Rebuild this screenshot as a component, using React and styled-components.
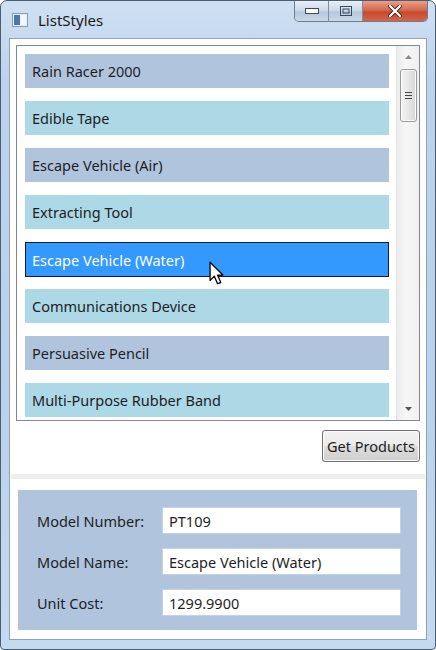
import React from "react";
import styled, { createGlobalStyle } from "styled-components";

const Global = createGlobalStyle`
  html, body { margin: 0; padding: 0; background: #ffffff; }
  body { font-family: "Noto Sans", "Open Sans", sans-serif; }
  * { box-sizing: border-box; }
`;

const Window = styled.div`
  position: relative;
  width: 436px;
  height: 650px;
  border: 1px solid #4b5d70;
  border-radius: 7px 7px 4px 4px;
  background: linear-gradient(180deg, #cfe0f2 0%, #bdd3ec 12%, #b9d1ea 60%, #c4daf0 100%);
  display: flex;
  flex-direction: column;
  overflow: hidden;
`;

const TitleBar = styled.div`
  height: 37px;
  display: flex;
  align-items: flex-start;
  padding-left: 11px;
`;

const TitleLeft = styled.div`
  display: flex;
  align-items: center;
  gap: 10px;
  height: 37px;
  flex: 1;
`;

const Title = styled.span`
  font-size: 15px;
  color: #1a1a1a;
`;

const Caption = styled.div`
  display: flex;
  margin-right: 7px;
  height: 21px;
  border: 1px solid #6a7c90;
  border-top: none;
  border-radius: 0 0 5px 5px;
  overflow: hidden;
`;

const CapButton = styled.div`
  width: ${(p) => p.$w}px;
  height: 20px;
  display: flex;
  align-items: center;
  justify-content: center;
  background: ${(p) =>
    p.$close
      ? "linear-gradient(180deg, #e8a08c 0%, #d66a4e 45%, #c74a2e 55%, #d4654a 100%)"
      : "linear-gradient(180deg, #e6eef8 0%, #cfdbea 45%, #b6c7dc 55%, #c9d8ea 100%)"};
  border-left: ${(p) => (p.$first ? "none" : "1px solid #7d8fa3")};
`;

const Client = styled.div`
  flex: 1;
  margin: 0 8px 9px 8px;
  border: 1px solid #8ea2b8;
  background: #ffffff;
  display: flex;
  flex-direction: column;
`;

const ListBox = styled.div`
  margin: 6px 6px 0 6px;
  height: 376px;
  border: 1px solid #828790;
  display: flex;
  overflow: hidden;
  background: #ffffff;
`;

const Items = styled.div`
  flex: 1;
  padding: 8px 7px 0 8px;
  display: flex;
  flex-direction: column;
  gap: 13px;
  overflow: hidden;
`;

const Item = styled.div`
  flex: none;
  height: ${(p) => (p.$selected ? "35px" : "34px")};
  margin-bottom: ${(p) => (p.$selected ? "-1px" : "0")};
  display: flex;
  align-items: center;
  padding-left: ${(p) => (p.$selected ? "6px" : "7px")};
  font-size: 14.5px;
  color: ${(p) => (p.$selected ? "#ffffff" : "#1e1e1e")};
  background: ${(p) => (p.$selected ? "#3399ff" : p.$alt ? "#add8e6" : "#b0c4de")};
  border: ${(p) => (p.$selected ? "1px solid #0e1a36" : "none")};
`;

const ScrollBar = styled.div`
  width: 23px;
  border-left: 1px solid #e4e4e4;
  background: linear-gradient(90deg, #ececec 0%, #f6f6f6 40%, #f0f0f0 100%);
  display: flex;
  flex-direction: column;
  align-items: center;
`;

const Arrow = styled.div`
  height: 22px;
  width: 100%;
  display: flex;
  align-items: center;
  justify-content: center;
`;

const Thumb = styled.div`
  width: 17px;
  height: 53px;
  margin-top: 1px;
  border: 1px solid #9a9a9a;
  border-radius: 3px;
  background: linear-gradient(90deg, #f4f4f4 0%, #e6e6e6 50%, #d6d6d6 100%);
  box-shadow: inset 0 0 0 1px #fbfbfb;
  display: flex;
  flex-direction: column;
  align-items: center;
  justify-content: center;
  gap: 2px;
`;

const Grip = styled.div`
  width: 7px;
  height: 1px;
  background: #444;
`;

const Track = styled.div`
  flex: 1;
`;

const ButtonRow = styled.div`
  display: flex;
  justify-content: flex-end;
  padding: 9px 6px 0 0;
`;

const PushButton = styled.button`
  height: 32px;
  width: 98px;
  padding: 0;
  font-family: "Noto Sans", "Open Sans", sans-serif;
  font-size: 14.5px;
  color: #1e1e1e;
  border: 1px solid #707070;
  border-radius: 3px;
  background: linear-gradient(180deg, #f2f2f2 0%, #ebebeb 50%, #dddddd 51%, #cfcfcf 100%);
  box-shadow: inset 0 0 0 1px #fafafa;
`;

const Separator = styled.div`
  height: 5px;
  margin: 12px 1px 0 1px;
  background: #eeeeee;
`;

const Details = styled.div`
  margin: 11px 9px 0 8px;
  height: 140px;
  background: #b0c4de;
  padding: 17px 16px 0 19px;
  display: grid;
  grid-template-columns: 125px 1fr;
  grid-auto-rows: 27px;
  row-gap: 14px;
  align-items: center;
`;

const Label = styled.span`
  font-size: 14.5px;
  color: #1e1e1e;
`;

const TextBox = styled.div`
  height: 27px;
  background: #ffffff;
  border: 1px solid #c4d2e4;
  display: flex;
  align-items: center;
  padding-left: 6px;
  font-size: 14.5px;
  color: #1e1e1e;
`;

const Cursor = styled.svg`
  position: absolute;
  left: 208px;
  top: 260px;
`;

const products = [
  "Rain Racer 2000",
  "Edible Tape",
  "Escape Vehicle (Air)",
  "Extracting Tool",
  "Escape Vehicle (Water)",
  "Communications Device",
  "Persuasive Pencil",
  "Multi-Purpose Rubber Band",
];

export default function App() {
  return (
    <>
      <Global />
      <Window>
        <TitleBar>
          <TitleLeft>
            <svg width="16" height="14" viewBox="0 0 16 14">
              <rect x="0.5" y="0.5" width="15" height="13" fill="#e8eef6" stroke="#8a9ab0" />
              <rect x="2" y="2" width="6" height="10" fill="#4a78a8" />
              <rect x="9" y="2" width="5" height="10" fill="#f4f6fa" />
            </svg>
            <Title>ListStyles</Title>
          </TitleLeft>
          <Caption>
            <CapButton $w={33} $first>
              <svg width="14" height="6" viewBox="0 0 14 6">
                <rect x="0.5" y="0.5" width="13" height="5" fill="#ffffff" stroke="#3b4a5c" />
              </svg>
            </CapButton>
            <CapButton $w={34}>
              <svg width="12" height="10" viewBox="0 0 12 10">
                <rect x="0.5" y="0.5" width="11" height="9" fill="none" stroke="#3b4a5c" />
                <rect x="3" y="3" width="6" height="4" fill="none" stroke="#3b4a5c" />
              </svg>
            </CapButton>
            <CapButton $w={65} $close>
              <svg width="14" height="12" viewBox="0 0 14 12">
                <path d="M2 1 L12 11 M12 1 L2 11" stroke="#4a1a10" strokeWidth="4" strokeLinecap="round" />
                <path d="M2 1 L12 11 M12 1 L2 11" stroke="#ffffff" strokeWidth="2.4" strokeLinecap="round" />
              </svg>
            </CapButton>
          </Caption>
        </TitleBar>
        <Client>
          <ListBox>
            <Items>
              {products.map((p, i) => (
                <Item key={p} $alt={i % 2 === 1} $selected={i === 4}>
                  {p}
                </Item>
              ))}
            </Items>
            <ScrollBar>
              <Arrow>
                <svg width="7" height="4" viewBox="0 0 7 4">
                  <path d="M0 4 L3.5 0 L7 4 Z" fill="#8a8a8a" />
                </svg>
              </Arrow>
              <Thumb>
                <Grip />
                <Grip />
                <Grip />
              </Thumb>
              <Track />
              <Arrow>
                <svg width="7" height="4" viewBox="0 0 7 4">
                  <path d="M0 0 L7 0 L3.5 4 Z" fill="#555" />
                </svg>
              </Arrow>
            </ScrollBar>
          </ListBox>
          <ButtonRow>
            <PushButton>Get Products</PushButton>
          </ButtonRow>
          <Separator />
          <Details>
            <Label>Model Number:</Label>
            <TextBox>PT109</TextBox>
            <Label>Model Name:</Label>
            <TextBox>Escape Vehicle (Water)</TextBox>
            <Label>Unit Cost:</Label>
            <TextBox>1299.9900</TextBox>
          </Details>
        </Client>
        <Cursor width="15" height="26" viewBox="0 0 14 24">
          <path d="M1 1 L1 18 L5 14 L8 21 L11 20 L8 13 L13 13 Z" fill="#ffffff" stroke="#000000" strokeWidth="1.2" strokeLinejoin="round" />
        </Cursor>
      </Window>
    </>
  );
}
